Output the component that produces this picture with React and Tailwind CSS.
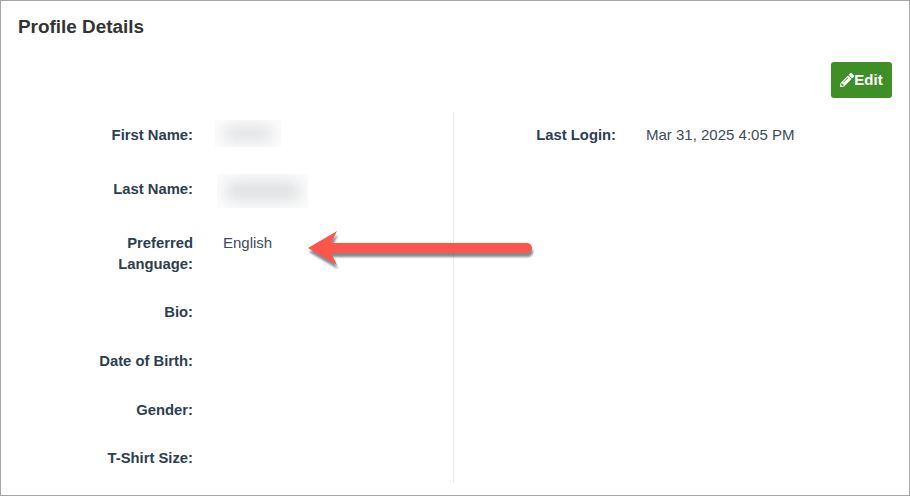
import { FaPencilAlt } from "react-icons/fa";

const rows = [
  { label: "First Name:", h: "h-[54px]", blur: "w-[66px] h-[27px] ml-[22px] -mt-[4px]", inner: "w-[48px] h-[15px]" },
  { label: "Last Name:", h: "h-[54px]", blur: "w-[91px] h-[34px] ml-[24px] -mt-[4px]", inner: "w-[76px] h-[20px]" },
  { label: "Preferred Language:", h: "h-[69px]", value: "English", wrap: "w-[94px] ml-auto" },
  { label: "Bio:", h: "h-[49px]" },
  { label: "Date of Birth:", h: "h-[49px]" },
  { label: "Gender:", h: "h-[48px]" },
  { label: "T-Shirt Size:", h: "h-[26px]" },
];

function Row({ row }) {
  return (
    <div className={`flex items-start ${row.h}`}>
      <div className="w-[192px] shrink-0 pt-[1px] text-right font-bold text-[14.8px] leading-[21px] text-[#2c3e50]">
        <div className={row.wrap}>{row.label}</div>
      </div>
      {row.value && <div className="ml-[30px] text-[15px] leading-[21px] text-[#3d4b5c]">{row.value}</div>}
      {row.blur && (
        <div className={`${row.blur} bg-[#fbfbfb] flex items-center justify-center overflow-hidden`}>
          <div className={`${row.inner} bg-[#dfe1e3] rounded-full blur-[7px]`}></div>
        </div>
      )}
    </div>
  );
}

export default function App() {
  return (
    <div className="relative w-[910px] h-[496px] bg-white border border-[#aaa5a5] overflow-hidden font-['Liberation_Sans',Arial,sans-serif]">
      <div className="flex items-start justify-between px-[17px] pt-[15px] h-[111px]">
        <h2 className="font-bold text-[18.9px] leading-[22px] text-[#333333]">Profile Details</h2>
        <button className="mt-[46px] w-[61px] h-[36px] rounded-[3px] bg-[#3f8f27] text-white font-bold text-[15px] flex items-center justify-center">
          <FaPencilAlt className="w-[14px] h-[14px]" />
          Edit
        </button>
      </div>
      <div className="flex">
        <div className="w-[453px] h-[371px] border-r border-[#e8e8e8] pt-[12px]">
          {rows.map((row) => (
            <Row key={row.label} row={row} />
          ))}
        </div>
        <div className="flex items-start pt-[12px] text-[15px] leading-[21px]">
          <div className="w-[162px] pt-[1px] text-right font-bold text-[14.8px] text-[#2c3e50]">Last Login:</div>
          <div className="ml-[30px] text-[#3d4b5c]">Mar 31, 2025 4:05 PM</div>
        </div>
      </div>
      <svg className="absolute left-[299px] top-[224px] w-[240px] h-[50px] overflow-visible" viewBox="0 0 240 50">
        <path d="M227 21 H31 L37 9 L8 26 L37 43 L31 31 H227 a5 5 0 0 0 0 -10 z" fill="#4f5963" opacity="0.7" transform="translate(1 1)" style={{ filter: "blur(1.2px)" }} />
        <path d="M227 18 H31 L37 6 L8 23 L37 40 L31 28 H227 a5 5 0 0 0 0 -10 z" fill="#fd5549" />
      </svg>
    </div>
  );
}
